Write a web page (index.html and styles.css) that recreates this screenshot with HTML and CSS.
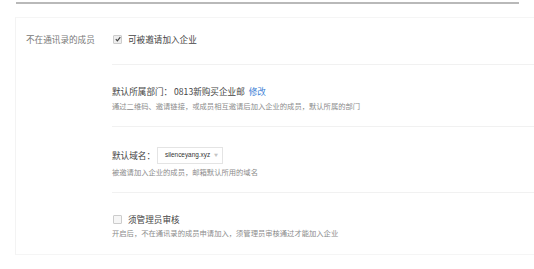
FILE: index.html
```html
<!DOCTYPE html>
<html>

<head>
    <title>成员设置</title>
    <meta charset="UTF-8">
    <link rel="stylesheet" href="styles.css">
</head>

<body>
    <div class="top-rule"></div>
    <div class="panel">
        <div class="row">
            <div class="row-label">不在通讯录的成员</div>
            <div class="row-body">
                <div class="section first">
                    <label class="check-line">
                        <span class="checkbox checked">
                            <svg width="6" height="6" viewBox="0 0 6 6">
                                <path d="M0.8 3.2 L2.4 4.8 L5.3 1.2" fill="none" stroke="#444" stroke-width="1.2" />
                            </svg>
                        </span>
                        <span class="check-text">可被邀请加入企业</span>
                    </label>
                </div>
                <div class="section dept">
                    <div class="title">默认所属部门： 0813新购买企业邮 <a class="link" href="#">修改</a></div>
                    <div class="desc">通过二维码、邀请链接，或成员相互邀请后加入企业的成员，默认所属的部门</div>
                </div>
                <div class="section domain">
                    <div class="title domain-line">
                        <span>默认域名：</span>
                        <span class="select">
                            <span class="select-value">silenceyang.xyz</span>
                            <span class="select-arrow">▼</span>
                        </span>
                    </div>
                    <div class="desc">被邀请加入企业的成员，邮箱默认所用的域名</div>
                </div>
                <div class="section audit">
                    <label class="check-line">
                        <span class="checkbox"></span>
                        <span class="check-text">须管理员审核</span>
                    </label>
                    <div class="desc">开启后，不在通讯录的成员申请加入，须管理员审核通过才能加入企业</div>
                </div>
            </div>
        </div>
    </div>
</body>

</html>
```

FILE: styles.css
```css
body {
    margin: 0;
    background-color: #ffffff;
    font-family: "Noto Sans CJK SC", "Liberation Sans", sans-serif;
    color: #444444;
    font-size: 8.6px;
}

.top-rule {
    margin: 2px 15px 0 16px;
    border-top: 2px solid #b9b9b9;
}

.panel {
    margin: 13px 0 0 15px;
    height: 236px;
    border-left: 1px solid #f3f3f3;
    border-top: 1px solid #f5f5f5;
    border-bottom: 1px solid #f5f5f5;
}

.row {
    display: flex;
}

.row-label {
    width: 86px;
    padding: 15px 0 0 10px;
    line-height: 12px;
    color: #777777;
}

.row-body {
    flex: 1;
}

.section {
    border-bottom: 1px solid #f1f1f1;
}

.section.first {
    padding: 15px 0 19px;
}

.section.dept {
    padding: 20px 0 15px;
}

.section.domain {
    padding: 19px 0 15px;
}

.section.audit {
    padding: 20px 0 12px;
    border-bottom: none;
}

.check-line {
    display: flex;
    align-items: center;
    height: 12px;
}

.checkbox {
    width: 7px;
    height: 7px;
    border: 1px solid #cccccc;
    background-color: #f6f6f6;
    border-radius: 1px;
    display: flex;
    align-items: center;
    justify-content: center;
    margin: 0 6px 0 1px;
}

.checkbox.checked {
    background-color: #eeeeee;
}

.check-text {
    color: #444444;
}

.title {
    line-height: 12px;
    color: #444444;
}

.link {
    color: #3b7fd6;
    text-decoration: none;
    margin-left: 2px;
}

.desc {
    margin-top: 4px;
    font-size: 7.3px;
    line-height: 10px;
    color: #8c8c8c;
}

.domain-line {
    display: flex;
    align-items: center;
    height: 18px;
}

.domain .desc {
    margin-top: 3px;
}

.audit .desc {
    margin-top: 3px;
}

.select {
    box-sizing: border-box;
    display: flex;
    align-items: center;
    justify-content: space-between;
    width: 66px;
    height: 17px;
    margin-left: 2px;
    padding: 0 4px 0 7px;
    border: 1px solid #e4e4e4;
    background-color: #ffffff;
}

.select-value {
    font-family: "Liberation Sans", sans-serif;
    font-size: 6.4px;
    color: #333333;
    white-space: nowrap;
}

.select-arrow {
    font-size: 4px;
    color: #c4c4c4;
}
```
